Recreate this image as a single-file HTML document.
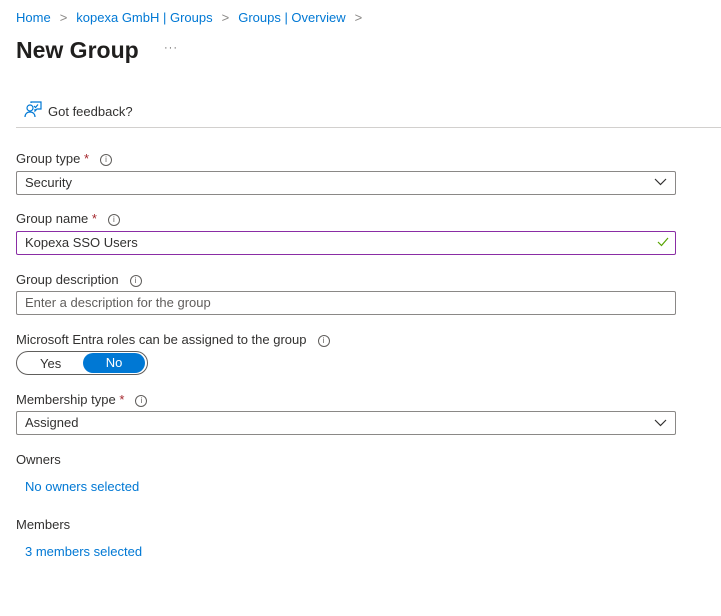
<!DOCTYPE html>
<html><head><style>
body{margin:0;width:721px;height:616px;background:#fff;font-family:"Liberation Sans",sans-serif;color:#323130;position:relative;overflow:hidden}
.a{position:absolute}
.bc{top:10px;left:16px;font-size:13px;color:#0078d4;white-space:nowrap}
.bc span.s{color:#8a8886;margin:0 9px}
.lbl{font-size:13px;left:16px;color:#323130;white-space:nowrap}
.req{color:#a4262c}
.info{display:inline-block;width:10px;height:10px;border:1px solid #605e5c;border-radius:50%;font-size:8px;line-height:10px;text-align:center;color:#605e5c;margin-left:11px;vertical-align:1px}
.inp{left:16px;width:658px;height:22px;border:1px solid #8a8886;border-radius:2px;font-size:13px;line-height:22px;box-sizing:content-box}
.inp span{padding-left:8px}
.link{left:25px;font-size:13px;color:#0078d4}
</style></head><body>
<div class="a bc">Home<span class="s">&gt;</span>kopexa GmbH | Groups<span class="s">&gt;</span>Groups | Overview<span class="s">&gt;</span></div>
<div class="a" style="top:37px;left:16px;font-size:23px;font-weight:bold;color:#201f1e">New Group</div>
<div class="a" style="top:42px;left:164px;font-size:11px;color:#605e5c;letter-spacing:1px">···</div>
<svg class="a" style="top:101px;left:24px" width="18" height="17" viewBox="0 0 18 17" fill="none" stroke="#0078d4" stroke-width="1.2"><circle cx="6" cy="7" r="3"/><path d="M1 16c0-3 2-5 5-5s5 2 5 5"/><path d="M7 2V1h10v7h-4l-2 2V8"/><path d="M10 5l1.5 1.5L14 3.5"/></svg>
<div class="a" style="top:104px;left:48px;font-size:13px">Got feedback?</div>
<div class="a" style="top:127px;left:16px;width:705px;height:1px;background:#d2d0ce"></div>

<div class="a lbl" style="top:151px">Group type <span class="req">*</span><span class="info">i</span></div>
<div class="a inp" style="top:171px"><span>Security</span></div>
<svg class="a" style="top:178px;left:654px" width="13" height="8"><path d="M1 1l5.5 5.5L12 1" fill="none" stroke="#323130" stroke-width="1.2"/></svg>

<div class="a lbl" style="top:211px">Group name <span class="req">*</span><span class="info">i</span></div>
<div class="a inp" style="top:231px;border-color:#8a2da5"><span>Kopexa SSO Users</span></div>
<svg class="a" style="top:237px;left:657px" width="12" height="10"><path d="M1 5l3.5 3.5L11 1" fill="none" stroke="#57a300" stroke-width="1.2"/></svg>

<div class="a lbl" style="top:272px">Group description<span class="info">i</span></div>
<div class="a inp" style="top:291px;color:#605e5c"><span>Enter a description for the group</span></div>

<div class="a lbl" style="top:332px">Microsoft Entra roles can be assigned to the group<span class="info">i</span></div>
<div class="a" style="top:351px;left:16px;width:130px;height:22px;border:1px solid #605e5c;border-radius:12px"></div>
<div class="a" style="top:356px;left:40px;font-size:13px">Yes</div>
<div class="a" style="top:353px;left:83px;width:62px;height:20px;background:#0078d4;border-radius:10px;color:#fff;font-size:13px;line-height:20px;text-align:center">No</div>

<div class="a lbl" style="top:392px">Membership type <span class="req">*</span><span class="info">i</span></div>
<div class="a inp" style="top:411px"><span>Assigned</span></div>
<svg class="a" style="top:419px;left:654px" width="13" height="8"><path d="M1 1l5.5 5.5L12 1" fill="none" stroke="#323130" stroke-width="1.2"/></svg>

<div class="a lbl" style="top:452px">Owners</div>
<div class="a link" style="top:479px">No owners selected</div>
<div class="a lbl" style="top:517px">Members</div>
<div class="a link" style="top:544px">3 members selected</div>
</body></html>
